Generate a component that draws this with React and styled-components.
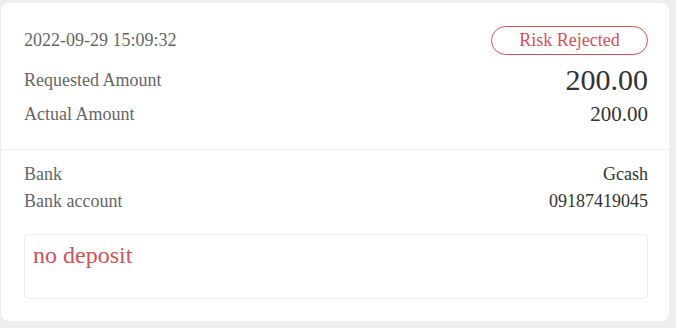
import styled, { createGlobalStyle } from 'styled-components';

const GlobalStyle = createGlobalStyle`
    html, body {
        margin: 0;
        background: #eeeeee;
    }
    body {
        padding: 3px 7px 6px 1px;
    }
`;

const Card = styled.div`
    background: #fff;
    border-radius: 8px;
    overflow: hidden;
    font-family: 'Liberation Serif', 'DejaVu Serif', serif;
`;

const Section = styled.div`
    padding: ${p => p.$pad};
    border-bottom: ${p => p.$divider ? '1px solid #eeeeee' : 'none'};
    display: flex;
    flex-direction: column;
`;

const Row = styled.div`
    display: flex;
    justify-content: space-between;
    align-items: center;
    height: ${p => p.$h}px;
    margin-top: ${p => p.$mt || 0}px;
`;

const Label = styled.span`
    font-size: 18px;
    color: #666;
`;

const Value = styled.span`
    font-size: ${p => p.$size || 18}px;
    color: #333;
`;

const Badge = styled.span`
    display: inline-flex;
    align-items: center;
    justify-content: center;
    box-sizing: border-box;
    width: 157px;
    height: 29px;
    border: 1px solid #d4515a;
    border-radius: 15px;
    color: #d4515a;
    font-size: 18px;
`;

const Remark = styled.div`
    margin-top: 23px;
    box-sizing: border-box;
    height: 65px;
    border: 1px solid #eeeeee;
    border-radius: 4px;
    padding: 5px 8px;
    color: #d4515a;
    font-size: 24px;
    line-height: 30px;
`;

const App = () => (
    <>
        <GlobalStyle />
        <Card>
            <Section $pad="23px 21px 25px 23px" $divider>
                <Row $h={29}>
                    <Label>2022-09-29 15:09:32</Label>
                    <Badge>Risk Rejected</Badge>
                </Row>
                <Row $h={30} $mt={10}>
                    <Label>Requested Amount</Label>
                    <Value $size={30}>200.00</Value>
                </Row>
                <Row $h={20} $mt={9}>
                    <Label>Actual Amount</Label>
                    <Value $size={21}>200.00</Value>
                </Row>
            </Section>
            <Section $pad="14px 21px 22px 23px">
                <Row $h={20}>
                    <Label>Bank</Label>
                    <Value>Gcash</Value>
                </Row>
                <Row $h={20} $mt={7}>
                    <Label>Bank account</Label>
                    <Value>09187419045</Value>
                </Row>
                <Remark>no deposit</Remark>
            </Section>
        </Card>
    </>
);

export default App;
